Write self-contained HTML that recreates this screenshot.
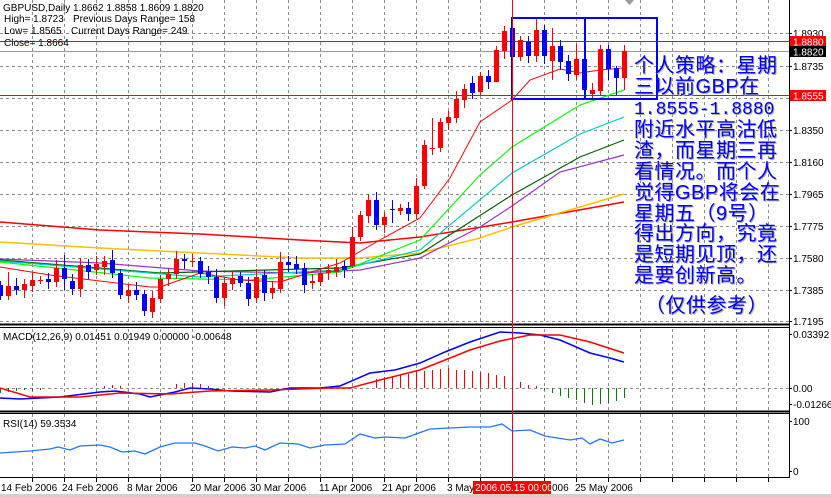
<!DOCTYPE html>
<html><head><meta charset="utf-8"><style>
html,body{margin:0;padding:0;background:#fff;width:831px;height:497px;overflow:hidden}
svg{display:block;font-family:"Liberation Sans",sans-serif}
.cn{position:absolute;left:634px;color:#0000ff;font-family:"Liberation Sans","Noto Sans CJK SC",sans-serif;font-size:20px;line-height:20.8px;text-shadow:1px 1px 0 #aaa;white-space:nowrap;letter-spacing:0.5px}
.mono{font-family:"Liberation Mono",monospace;font-size:18px;letter-spacing:0}
</style></head><body>
<svg id="s" width="831" height="497" viewBox="0 0 831 497" xmlns="http://www.w3.org/2000/svg">
<rect width="831" height="497" fill="#fff"/>
<g id="grid" stroke="#8c8c8c" stroke-dasharray="3,3" stroke-width="1"></g>
<g id="main"></g>
<g font-size="10" fill="#000">
<text x="3" y="11">GBPUSD,Daily  1.8662 1.8858 1.8609 1.8820</text>
<text x="4" y="22">High= 1.8723</text><text x="73" y="22">Previous Days Range= 158</text>
<text x="4" y="34">Low= 1.8565</text><text x="71" y="34">Current Days Range= 249</text>
<text x="4" y="46">Close= 1.8664</text>
<text x="3" y="340">MACD(12,26,9) 0.01451 0.01949 0.00000 -0.00648</text>
<text x="3" y="427">RSI(14) 59.3534</text>
</g>
<g font-size="10" fill="#000" id="axis"></g>
</svg>
<div class="cn" style="top:56px">个人策略：星期<br>三以前GBP在<br><span class="mono">1.8555-1.8880</span><br>附近水平高沽低<br>渣，而星期三再<br>看情况。而个人<br>觉得GBP将会在<br>星期五（9号）<br>得出方向，究竟<br>是短期见顶，还<br>是要创新高。</div>
<div class="cn" style="top:296px;left:645px">（仅供参考）</div>
<script>
const NS="http://www.w3.org/2000/svg";
function el(p,t,a){const e=document.createElementNS(NS,t);for(const k in a)e.setAttribute(k,a[k]);p.appendChild(e);return e;}
const g=document.getElementById('grid'),m=document.getElementById('main'),ax=document.getElementById('axis');
for(let x=32;x<789;x+=32){el(g,'line',{x1:x+.5,y1:0,x2:x+.5,y2:324});el(g,'line',{x1:x+.5,y1:329,x2:x+.5,y2:411});el(g,'line',{x1:x+.5,y1:414,x2:x+.5,y2:477});}
const ly=[33,66,98,130,162,194,226,258,290,321];
ly.forEach(y=>el(g,'line',{x1:0,y1:y+.5,x2:789,y2:y+.5}));
el(g,'line',{x1:0,y1:388.5,x2:789,y2:388.5});
el(m,'line',{x1:0,y1:41.5,x2:789,y2:41.5,stroke:'#f00'});
el(m,'line',{x1:0,y1:51.5,x2:789,y2:51.5,stroke:'#999'});
el(m,'line',{x1:0,y1:95.5,x2:789,y2:95.5,stroke:'#f00'});
function pl(pts,c,w){el(m,'polyline',{points:pts.map(p=>p.join(',')).join(' '),fill:'none',stroke:c,'stroke-width':w||1});}
pl([[0,222],[100,230],[200,234],[300,240],[360,243],[420,237],[512,222],[624,202]],'#f00',1.5);
pl([[0,242],[100,248],[200,253],[300,258],[360,258],[420,253],[480,238],[512,227],[624,194]],'#ffc000',1.5);
pl([[0,259],[100,263],[200,271],[300,273],[360,270],[420,258],[480,227],[512,206],[560,172],[624,155]],'#9933cc',1.2);
pl([[0,260],[160,273],[340,268],[420,254],[512,195],[580,157],[624,140]],'#006400',1.2);
pl([[0,261],[200,277],[340,270],[420,250],[512,173],[580,134],[624,117]],'#00cccc',1.2);
pl([[0,262],[150,278],[250,280],[340,272],[420,240],[480,175],[512,147],[580,105],[624,90]],'#00ff00',1.2);
pl([[0,267],[50,275],[150,287],[160,287],[200,273],[240,280],[280,282],[340,263],[380,240],[420,218],[450,178],[480,122],[512,100],[530,80],[560,69],[580,73],[600,70],[624,68]],'#f00',1);
const C=[[285,296,'b'],[286,296,'r'],[286,290,'b'],[284,290,'r'],[280,286,'r'],[280,280,'r'],[279,282,'b'],[268,282,'r'],[268,279,'b'],[281,289,'b'],
[265,289,'r'],[265,272,'b'],[264,270,'r'],[261,267,'r'],[260,273,'b'],[273,295,'b'],[290,296,'r'],[290,295,'b'],[294,311,'b'],[298,312,'r'],
[279,299,'r'],[274,279,'r'],[259,274,'r'],[259,261,'b'],[261,261,'r'],[261,274,'b'],[272,277,'b'],[277,298,'b'],[283,298,'r'],[278,284,'r'],
[276,283,'b'],[283,299,'b'],[277,298,'r'],[275,293,'b'],[288,293,'r'],[262,289,'r'],[262,265,'b'],[264,269,'b'],[268,285,'b'],[281,283,'r'],
[273,282,'r'],[270,273,'r'],[267,272,'r'],[266,270,'b'],[237,266,'r'],[215,237,'r'],[200,216,'r'],[200,225,'b'],[217,225,'r'],[209,210,'b'],
[208,211,'r'],[208,214,'b'],[186,214,'r'],[145,186,'r'],[148,148,'r'],[122,148,'r'],[117,123,'r'],[99,118,'r'],[89,100,'r'],[83,93,'b'],
[76,92,'r'],[76,82,'b'],[50,82,'r'],[31,51,'r'],[28,57,'b'],[40,57,'r'],[42,56,'b'],[30,56,'r'],[30,56,'b'],[46,61,'r'],
[46,62,'b'],[61,74,'b'],[59,75,'r'],[59,90,'b'],[90,94,'r'],[49,91,'r'],[49,69,'b'],[68,78,'b'],[51,78,'r']];
const wk={1:[272,300],10:[258,297],18:[290,316],35:[252,293],14:[250,278],49:[200,223],54:[118,155],53:[140,189],62:[46,82],64:[18,97],67:[17,62],69:[28,80],70:[40,70],72:[44,80],73:[45,96],76:[45,80],77:[66,95],78:[45,90],44:[227,268],8:[255,290]};
C.forEach((c,k)=>{const x=k*8,col=c[2]=='r'?'#f00':'#00f';let w=wk[k]||[c[0]-4-(k*7%5),c[1]+4+(k*3%5)];
el(m,'line',{x1:x+.5,y1:w[0],x2:x+.5,y2:w[1],stroke:col});
const h=Math.max(1,c[1]-c[0]);el(m,'rect',{x:x-2,y:c[0],width:5,height:h,fill:col});});
el(m,'rect',{x:512,y:18,width:145,height:81,fill:'none',stroke:'#00f','stroke-width':2});
el(m,'line',{x1:585,y1:18,x2:585,y2:99,stroke:'#00f','stroke-width':2});
el(m,'polygon',{points:'625,0 634,0 629.5,5',fill:'#999'});
[[0,324.5],[0,327.5],[0,411.5],[0,413.5],[0,477.5]].forEach(a=>el(m,'line',{x1:0,y1:a[1],x2:789,y2:a[1],stroke:'#000','stroke-width':a[1]==324.5||a[1]==411.5?2:1}));
el(m,'line',{x1:789.5,y1:0,x2:789.5,y2:478,stroke:'#000'});
const H={0:393,8:392,16:391,24:390,32:391,40:390,104:386,112:385,120:386,176:384,184:383,192:383,200:384,208:386,368:388,376:379,384:377,392:376,400:375,408:374,416:372,424:371,432:370,440:369,448:368,456:370,464:370,472:371,480:372,488:373,496:375,504:376,520:382,528:385,536:386,544:390,552:393,560:396,568:398,576:400,584:403,592:405,600:404,608:403,616:401,624:398};
for(const x in H){const v=H[x];el(m,'line',{x1:+x+.5,y1:388,x2:+x+.5,y2:v,stroke:v<388?'#f00':'#008000'});}
pl([[0,398],[20,399],[60,397],[100,392],[115,391],[140,394],[150,397],[175,392],[190,388],[210,389],[230,391],[270,392],[290,388],[320,388],[340,386],[370,373],[395,370],[420,363],[445,352],[470,342],[500,332],[520,333],[540,335],[560,340],[590,353],[610,358],[624,362]],'#00f',1.5);
pl([[0,388],[30,397],[80,397],[120,393],[170,394],[210,391],[270,390],[330,388],[350,388],[380,380],[420,370],[470,350],[500,341],[530,335],[560,335],[590,342],[624,353]],'#f00',1.5);
pl([[0,453],[30,451],[50,449],[58,447],[70,450],[80,446],[100,445],[110,447],[122,452],[135,451],[145,454],[160,447],[175,443],[195,443],[205,446],[218,451],[232,447],[245,448],[255,446],[265,450],[280,443],[298,444],[310,448],[325,445],[345,444],[360,434],[375,438],[385,437],[405,438],[430,429],[450,428],[470,427],[490,427],[502,424],[512,431],[530,430],[545,436],[570,440],[582,438],[590,444],[600,439],[612,443],[624,440]],'#1e78ff',1.3);
el(m,'line',{x1:512.5,y1:0,x2:512.5,y2:478,stroke:'#f00'});
const L=[['1.8930',37],['1.8735',70],['1.8350',134],['1.8160',166],['1.7965',198],['1.7775',230],['1.7580',262],['1.7385',294],['1.7195',325],['0.03392',338],['0.00',392],['-0.01266',408],['100',425],['0',475]];
L.forEach(l=>{el(ax,'text',{x:793,y:l[1]}).textContent=l[0];el(ax,'line',{x1:789,y1:l[1]-3.5,x2:792,y2:l[1]-3.5,stroke:'#000'});});
[['1.8880',36,'#f00','#fff'],['1.8820',46,'#000','#fff'],['1.8555',90,'#f00','#fff']].forEach(b=>{el(ax,'rect',{x:790,y:b[1],width:36,height:11,fill:b[2]});const t=el(ax,'text',{x:793,y:b[1]+9.5,fill:b[3]});t.textContent=b[0];});
const D=[['14 Feb 2006',1],['24 Feb 2006',62],['8 Mar 2006',127],['20 Mar 2006',190],['30 Mar 2006',250],['11 Apr 2006',319],['21 Apr 2006',382],['3 May',447],['006',552],['25 May 2006',575]];
D.forEach(d=>{el(ax,'text',{x:d[1],y:491}).textContent=d[0];});
for(let x=32;x<789;x+=32)el(ax,'line',{x1:x+.5,y1:478,x2:x+.5,y2:482,stroke:'#000'});
el(ax,'rect',{x:473,y:481,width:78,height:13,fill:'#f00'});
const tt=el(ax,'text',{x:475,y:491,fill:'#fff'});tt.textContent='2006.05.15 00:00';
el(ax,'rect',{x:0,y:494,width:831,height:3,fill:'#d4d0c8'});
</script>
</body></html>
